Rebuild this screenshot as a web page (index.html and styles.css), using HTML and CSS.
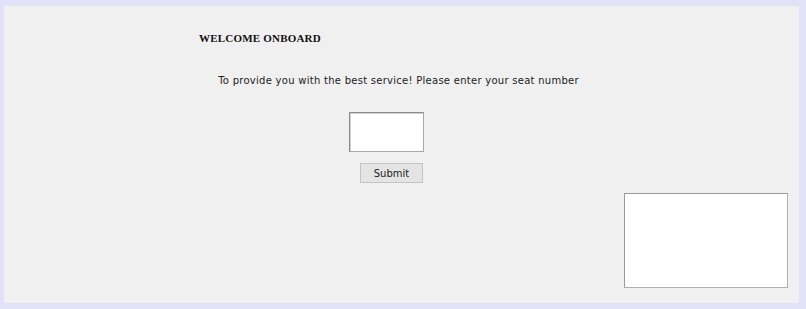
FILE: index.html
```html
<!DOCTYPE html>
<html>
<head>
<meta charset="utf-8">
<link rel="stylesheet" href="styles.css">
</head>
<body>
<div class="frame">
  <div class="panel">
    <h1 class="title">WELCOME ONBOARD</h1>
    <p class="intro">To provide you with the best service! Please enter your seat number</p>
    <div class="form">
      <input class="seat" type="text">
      <button class="submit" type="button">Submit</button>
    </div>
    <div class="bottom">
      <textarea class="notes"></textarea>
    </div>
  </div>
</div>
</body>
</html>
```
FILE: styles.css
```css
html, body {
  margin: 0;
  padding: 0;
  background: #e2e1fa;
}
.frame {
  width: 806px;
  height: 309px;
  box-sizing: border-box;
  padding: 6px 7px 6px 4px;
}
.panel {
  height: 100%;
  background: #f0f0f0;
  display: flex;
  flex-direction: column;
}
.title {
  margin: 25px 0 0 195px;
  font-family: "Liberation Serif", serif;
  font-weight: bold;
  font-size: 11px;
  line-height: 14px;
  color: #111;
  letter-spacing: 0.2px;
}
.intro {
  margin: 29px 6px 0 0;
  text-align: center;
  font-family: "DejaVu Sans", sans-serif;
  font-size: 10px;
  line-height: 14px;
  letter-spacing: 0.27px;
  color: #222;
}
.form {
  margin: 24px 0 0 345px;
  display: flex;
  flex-direction: column;
  align-items: flex-start;
}
.seat {
  width: 75px;
  height: 40px;
  box-sizing: border-box;
  margin: 0;
  border: 1px solid #a8a8a8;
  border-top-color: #8c8c8c;
  border-left-color: #8c8c8c;
  background: #fff;
  box-shadow: inset 1px 1px 0 #d0d0d0;
}
.submit {
  margin: 11px 0 0 11px;
  width: 63px;
  height: 20px;
  box-sizing: border-box;
  border: 1px solid #c4c4c4;
  background: #e4e4e4;
  font-family: "DejaVu Sans", sans-serif;
  font-size: 10px;
  color: #222;
  padding: 0;
}
.bottom {
  display: flex;
  justify-content: flex-end;
  margin: 10px 11px 0 0;
}
.notes {
  width: 164px;
  height: 95px;
  box-sizing: border-box;
  margin: 0;
  border: 1px solid #b0b0b0;
  border-top-color: #9a9a9a;
  border-left-color: #9a9a9a;
  background: #fff;
  resize: none;
}
```
